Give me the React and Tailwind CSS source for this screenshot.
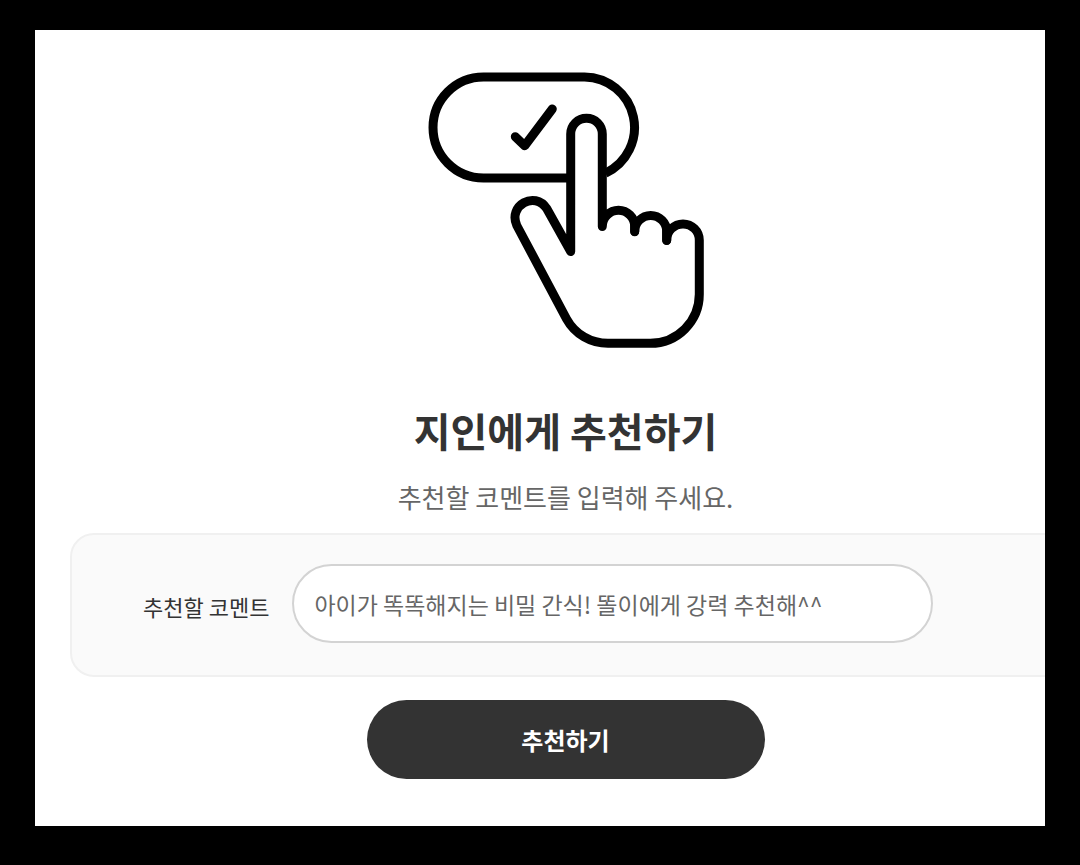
import { useState } from 'react'

const TapIcon = () => (
  <svg
    viewBox="0 0 276 276"
    className="w-[276px] h-[276px]"
    fill="none"
    stroke="#000"
    strokeWidth="9"
    strokeLinecap="round"
    strokeLinejoin="round"
    aria-hidden="true"
  >
    {/* pill button with check */}
    <path
      d="M142.7 106H55.5a50.5 50.5 0 0 1 0-101h101a50.5 50.5 0 0 1 21 96.2"
      strokeLinecap="butt"
    />
    <path d="M87.3 64.7l9.4 9 27.6-36.700" />
    {/* hand */}
    <path d="M142.7 179.5V62a15.8 15.8 0 0 1 31.6 0v92.5a16.2 16.2 0 0 1 32.4 0v5a16 16 0 0 1 32 0v8.7a16.3 16.3 0 0 1 32.6 0V222.300a49 49 0 0 1-49 49H180c-17 0-33-9-41.500-24.500L88.800 153.500c-9-20 18-35 29.900-17z" />
    <path d="M206.700 154v5.700M238.700 159v9.500" />
  </svg>
)

const App = () => {
  const [comment, setComment] = useState('아이가 똑똑해지는 비밀 간식! 똘이에게 강력 추천해^^')

  const handleSubmit = (e) => {
    e.preventDefault()
  }

  return (
    <div className="min-h-screen bg-black px-[35px] pt-[30px] pb-[39px] font-['Noto_Sans_CJK_KR',sans-serif]">
      <main className="overflow-hidden bg-white pt-[42px] pb-[47px] pl-[35px]">
        <form onSubmit={handleSubmit} className="-mr-4 flex flex-col items-center">
          <TapIcon />
          <h1 className="mt-[58px] text-[40px] leading-[48px] font-bold text-[#333]">지인에게 추천하기</h1>
          <p className="mt-[25px] text-[26px] leading-[36px] text-[#666]">추천할 코멘트를 입력해 주세요.</p>

          <div className="mt-[18px] flex w-full items-center gap-[23px] rounded-l-[24px] border-2 border-[#f0f0f0] bg-[#fafafa] pt-[29px] pr-[126px] pb-8 pl-[71px]">
            <label htmlFor="comment" className="shrink-0 pt-1 text-[22px] leading-8 text-[#333]">
              추천할 코멘트
            </label>
            <input
              id="comment"
              type="text"
              value={comment}
              onChange={(e) => setComment(e.target.value)}
              className="h-[79px] min-w-0 flex-1 rounded-full border-2 border-[#d3d3d3] bg-white px-5 text-[23px] text-[#666] outline-none"
            />
          </div>

          <button
            type="submit"
            className="mt-[23px] h-[79px] w-[398px] cursor-pointer rounded-full bg-[#333] text-[24px] font-bold text-white"
          >
            추천하기
          </button>
        </form>
      </main>
    </div>
  )
}

export default App
